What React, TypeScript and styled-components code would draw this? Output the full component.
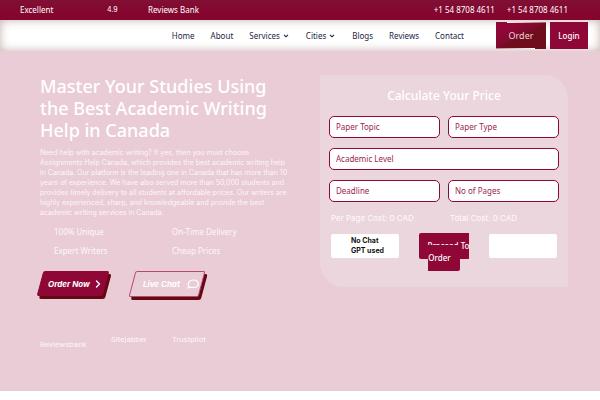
import React from "react";
import styled, { createGlobalStyle } from "styled-components";

const wine = "#8f0737";
const oxblood = "#650811";
const sans = '"Noto Sans", sans-serif';
const inter = 'Inter, sans-serif';

const GlobalStyle = createGlobalStyle`
  *, *::before, *::after { box-sizing: border-box; }
  body { margin: 0; background: #fff; font-family: ${sans}; font-size: 8px; line-height: 12px; }
  h1, h2, p, ul { margin: 0; padding: 0; }
  a { color: inherit; text-decoration: none; }
  button, input, select { font: inherit; }
`;

const TopBar = styled.div`
  display: flex;
  align-items: center;
  height: 20px;
  padding: 0 32px 0 20px;
  color: #fff;
  background: linear-gradient(#801034, #84062f 60%);
`;

const Rating = styled.div`
  display: flex;
  flex: 1;
`;

const RatingWord = styled.span`
  width: 87px;
`;

const RatingScore = styled.span`
  width: 41px;
  font-family: ${inter};
  font-size: 7px;
`;

const Phones = styled.div`
  display: flex;
  gap: 12px;
`;

const Header = styled.header`
  display: flex;
  align-items: center;
  justify-content: flex-end;
  height: 31px;
  padding-right: 12px;
  background: #fff;
  box-shadow: inset 0 0 10px rgba(105, 55, 45, 0.4);
`;

const Nav = styled.nav`
  display: flex;
  gap: 16px;
  margin-right: 32px;
  color: #1d2545;
`;

const NavLink = styled.a`
  display: flex;
  align-items: center;
  gap: 3px;
`;

const HeaderActions = styled.div`
  display: flex;
  gap: 4px;
`;

const HeaderButton = styled.button`
  height: 27px;
  padding: 0;
  border: 0;
  color: #fff;
  font-weight: 500;
`;

const LoginButton = styled(HeaderButton)`
  width: 38px;
  background: ${wine};
`;

const OrderButton = styled(HeaderButton)`
  position: relative;
  width: 50px;
  font-size: 9px;
  font-weight: 400;
  color: #ecd5da;
  background: linear-gradient(to bottom right, ${wine} 25%, #7d0a2a 49%, #6f0d1c 52%);

  &::before,
  &::after {
    content: "";
    position: absolute;
    height: 1px;
  }
  &::before {
    top: 0;
    left: 11px;
    right: 0;
    background: linear-gradient(to right, #fff, rgba(255, 255, 255, 0.3));
  }
  &::after {
    bottom: 0;
    left: 0;
    right: 11px;
    background: linear-gradient(to left, #fff, rgba(255, 255, 255, 0.5));
  }
`;

const Hero = styled.main`
  display: grid;
  grid-template-columns: 1fr 1fr;
  align-items: start;
  gap: 32px;
  padding: 24px 32px 40px 40px;
  color: #fff;
  background: #eaccd6;
`;

const Title = styled.h1`
  font-size: 18px;
  font-weight: 500;
  line-height: 22px;
`;

const Intro = styled.p`
  margin-top: 7px;
  font-family: ${inter};
  font-size: 7px;
  line-height: 10px;
  color: rgba(255, 255, 255, 0.85);
`;

const Features = styled.ul`
  display: grid;
  grid-template-columns: 118px auto;
  row-gap: 7px;
  margin: 8px 0 0 14px;
  list-style: none;
  color: rgba(255, 255, 255, 0.9);
`;

const Actions = styled.div`
  display: flex;
  gap: 20px;
  margin: 14px 0 0 -3px;
`;

const SlantButton = styled.button<{ $outline?: boolean }>`
  position: relative;
  isolation: isolate;
  display: flex;
  align-items: center;
  justify-content: space-between;
  width: ${(p) => (p.$outline ? "76px" : "72px")};
  height: ${(p) => (p.$outline ? "26px" : "25px")};
  padding: ${(p) => (p.$outline ? "0 6px 0 14px" : "0 8px 0 11px")};
  border: 0;
  background: none;
  color: #fff;
  font-family: ${inter};
  font-size: 8px;
  font-style: italic;
  font-weight: 700;
  white-space: nowrap;

  &::before {
    content: "";
    position: absolute;
    z-index: -1;
    inset: 0 3px;
    border: 1px solid ${(p) => (p.$outline ? "#b34a73" : wine)};
    border-radius: 2px;
    background: ${(p) => (p.$outline ? "#eaccd6" : wine)};
    box-shadow: 3px 3px 0 ${oxblood};
    transform: skewX(-15deg);
  }
`;

const Partners = styled.ul`
  display: grid;
  grid-template-columns: 71px 61px auto;
  margin-top: 37px;
  list-style: none;
  font-family: Roboto, sans-serif;
  font-size: 8px;
  color: rgba(255, 255, 255, 0.85);

  li:first-child { padding-top: 5px; }
`;

const Calculator = styled.form`
  padding: 11px 9px 23px;
  border-radius: 0 24px 0 24px;
  background: #ecd6dd;
`;

const CalculatorTitle = styled.h2`
  font-size: 12px;
  font-weight: 500;
  line-height: 20px;
  text-align: center;
`;

const Fields = styled.div`
  display: grid;
  grid-template-columns: 1fr 1fr;
  gap: 10px 8px;
  margin-top: 10px;
`;

const Field = styled.input`
  width: 100%;
  min-width: 0;
  height: 22px;
  padding: 0 6px 1px;
  border: 1px solid ${wine};
  border-radius: 5px;
  background: #fff;
  color: ${wine};

  &::placeholder { color: ${wine}; opacity: 0.9; }
`;

const SelectField = styled(Field).attrs({ as: "select" })<{ $wide?: boolean }>`
  appearance: none;
  padding-bottom: 0;
  color: #9a1f4b;
  grid-column: ${(p) => (p.$wide ? "1 / -1" : "auto")};
`;

const Costs = styled.div`
  display: grid;
  grid-template-columns: 119px auto;
  margin: 10px 2px 0;
  font-family: ${inter};
  color: rgba(255, 255, 255, 0.9);
`;

const FormFooter = styled.div`
  display: grid;
  grid-template-columns: 68px 1fr 68px;
  align-items: start;
  column-gap: 18px;
  margin: 10px 2px 0;
`;

const Badge = styled.div`
  height: 24px;
  padding: 2px 12px 2px 20px;
  border-radius: 2px;
  background: #fff;
  color: #111;
  font-family: ${inter};
  font-size: 7px;
  font-weight: 700;
  line-height: 10px;
`;

const ProceedCell = styled.div`
  margin: 0 -10px;
  padding: 6px 10px 0;
  text-align: center;
`;

const ProceedLink = styled.a`
  padding: 7px 9px 8px;
  border-radius: 2px;
  background: ${wine};
  font-weight: 500;
`;

const Chevron = ({ right }: { right?: boolean }) =>
  right ? (
    <svg width="6" height="8" viewBox="0 0 6 8" fill="none" stroke="currentColor" strokeWidth="1.4" strokeLinecap="round" strokeLinejoin="round" aria-hidden="true">
      <path d="M1.5 1 4.5 4 1.5 7" />
    </svg>
  ) : (
    <svg width="7" height="4" viewBox="0 0 7 4" fill="none" stroke="currentColor" strokeWidth="1.1" aria-hidden="true">
      <path d="M1 .8 3 2.8 5 .8" />
    </svg>
  );

const ChatIcon = () => (
  <svg width="12" height="10" viewBox="0 0 12 10" fill="none" stroke="currentColor" strokeWidth="1.2" strokeLinejoin="round" aria-hidden="true">
    <path d="M3.2 8.1C2.6 8.7 1.8 9 1 9 1.5 8.4 1.8 7.7 1.8 7 1.3 6.3 1.1 5.5 1.3 4.6 1.8 2.1 3.9 1 6.5 1 9.4 1 11.2 2.4 11.2 4.7 11.2 7.1 9.2 8.5 6.3 8.5 5.2 8.5 4.1 8.4 3.2 8.1Z" />
  </svg>
);

const navItems = [
  { label: "Home" },
  { label: "About" },
  { label: "Services", menu: true },
  { label: "Cities", menu: true },
  { label: "Blogs" },
  { label: "Reviews" },
  { label: "Contact" },
];
const features = ["100% Unique", "On-Time Delivery", "Expert Writers", "Cheap Prices"];
const partners = ["Reviewsbank", "Sitejabber", "Trustpilot"];

export default function App() {
  return (
    <>
      <GlobalStyle />
      <TopBar>
        <Rating>
          <RatingWord>Excellent</RatingWord>
          <RatingScore>4.9</RatingScore>
          <span>Reviews Bank</span>
        </Rating>
        <Phones>
          <a href="tel:+15487084611">+1 54 8708 4611</a>
          <a href="tel:+15487084611">+1 54 8708 4611</a>
        </Phones>
      </TopBar>
      <Header>
        <Nav>
          {navItems.map((item) => (
            <NavLink key={item.label} href="#">
              {item.label}
              {item.menu && <Chevron />}
            </NavLink>
          ))}
        </Nav>
        <HeaderActions>
          <OrderButton type="button">Order</OrderButton>
          <LoginButton type="button">Login</LoginButton>
        </HeaderActions>
      </Header>
      <Hero>
        <section>
          <Title>Master Your Studies Using the Best Academic Writing Help in Canada</Title>
          <Intro>
            Need help with academic writing? If yes, then you must choose Assignments Help Canada,
            which provides the best academic writing help in Canada. Our platform is the leading one
            in Canada that has more than 10 years of experience. We have also served more than
            50,000 students and provides timely delivery to all students at affordable prices. Our
            writers are highly experienced, sharp, and knowledgeable and provide the best academic
            writing services in Canada.
          </Intro>
          <Features>
            {features.map((feature) => (
              <li key={feature}>{feature}</li>
            ))}
          </Features>
          <Actions>
            <SlantButton type="button">
              Order Now
              <Chevron right />
            </SlantButton>
            <SlantButton type="button" $outline>
              Live Chat
              <ChatIcon />
            </SlantButton>
          </Actions>
          <Partners>
            {partners.map((partner) => (
              <li key={partner}>{partner}</li>
            ))}
          </Partners>
        </section>
        <Calculator>
          <CalculatorTitle>Calculate Your Price</CalculatorTitle>
          <Fields>
            <Field aria-label="Paper Topic" placeholder="Paper Topic" />
            <SelectField aria-label="Paper Type">
              <option>Paper Type</option>
            </SelectField>
            <SelectField aria-label="Academic Level" $wide>
              <option>Academic Level</option>
            </SelectField>
            <Field aria-label="Deadline" placeholder="Deadline" />
            <SelectField aria-label="No of Pages">
              <option>No of Pages</option>
            </SelectField>
          </Fields>
          <Costs>
            <span>Per Page Cost: 0 CAD</span>
            <span>Total Cost: 0 CAD</span>
          </Costs>
          <FormFooter>
            <Badge>No Chat GPT used</Badge>
            <ProceedCell>
              <ProceedLink href="#">Proceed To Order</ProceedLink>
            </ProceedCell>
            <Badge />
          </FormFooter>
        </Calculator>
      </Hero>
    </>
  );
}
